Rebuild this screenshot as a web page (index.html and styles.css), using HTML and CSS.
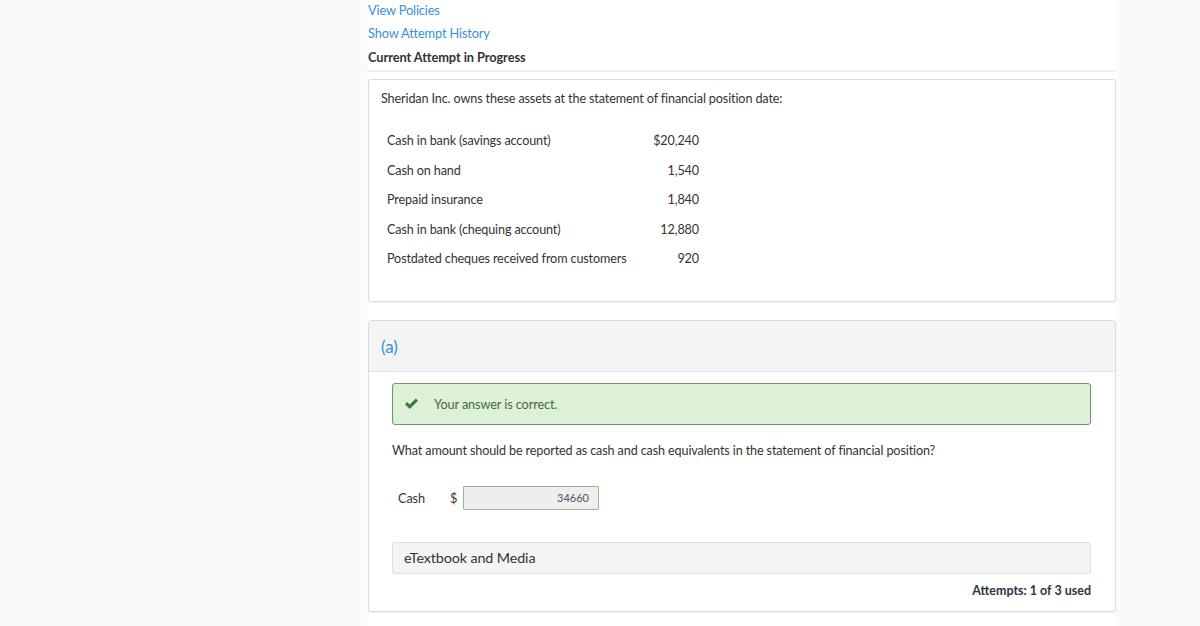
FILE: index.html
```html
<!DOCTYPE html>
<html>
<head>
<meta charset="utf-8">
<link rel="stylesheet" href="styles.css">
</head>
<body>
<main class="column">
  <nav class="top">
    <a class="link" href="#">View Policies</a>
    <a class="link" href="#">Show Attempt History</a>
    <div class="current">Current Attempt in Progress</div>
  </nav>

  <section class="card intro-card">
    <p class="intro">Sheridan Inc. owns these assets at the statement of financial position date:</p>
    <div class="assets">
      <span class="label">Cash in bank (savings account)</span><span class="value">$20,240</span>
      <span class="label">Cash on hand</span><span class="value">1,540</span>
      <span class="label">Prepaid insurance</span><span class="value">1,840</span>
      <span class="label">Cash in bank (chequing account)</span><span class="value">12,880</span>
      <span class="label">Postdated cheques received from customers</span><span class="value">920</span>
    </div>
  </section>

  <section class="card part">
    <header class="part-head">(a)</header>
    <div class="part-body">
      <div class="alert">
        <svg class="check" width="15" height="12" viewBox="0 0 15 12"><path d="M1 6.2 L3.2 4 L5.8 6.6 L11.8 0.6 L14 2.8 L5.8 11 Z" fill="#3b7a3b"/></svg>
        <span>Your answer is correct.</span>
      </div>
      <p class="question">What amount should be reported as cash and cash equivalents in the statement of financial position?</p>
      <div class="answer-row">
        <span class="cash">Cash</span>
        <span class="dollar">$</span>
        <div class="input">34660</div>
      </div>
      <div class="media">eTextbook and Media</div>
      <div class="attempts">Attempts: 1 of 3 used</div>
    </div>
  </section>
</main>
</body>
</html>
```

FILE: styles.css
```css
html, body {
  margin: 0;
  padding: 0;
  background: #fafafa;
  font-family: Lato, "Open Sans", "Liberation Sans", sans-serif;
  color: #333;
}
.column {
  margin-left: 367px;
  width: 749px;
  min-height: 626px;
  background: #fff;
}
.top {
  display: flex;
  flex-direction: column;
  padding-left: 1px;
  height: 70px;
  border-bottom: 2px solid #f0f0f0;
  font-size: 12.8px;
}
.link {
  color: #3590dc;
  text-decoration: none;
  line-height: 23px;
  letter-spacing: -0.15px;
}
.link:first-child {
  margin-top: -1px;
}
.current {
  font-weight: bold;
  line-height: 23px;
  padding-top: 1px;
  letter-spacing: -0.08px;
  color: #333;
}
.card {
  margin-left: 1px;
  border: 1px solid #dcdcdc;
  border-radius: 3px;
  box-shadow: 0 1px 1px rgba(0,0,0,0.06);
  background: #fff;
}
.intro-card {
  margin-top: 7px;
  padding: 9px 12px 29px;
  height: 183px;
}
.intro {
  margin: 0;
  font-size: 12.6px;
  letter-spacing: -0.12px;
  line-height: 20px;
}
.assets {
  margin: 17px 0 0 6px;
  display: grid;
  grid-template-columns: 250px 62px;
  font-size: 12.6px;
  letter-spacing: -0.12px;
}
.assets span {
  line-height: 29.5px;
  white-space: nowrap;
}
.value {
  text-align: right;
}
.part {
  margin-top: 18px;
  height: 290px;
}
.part-head {
  height: 50px;
  line-height: 51px;
  padding-left: 12px;
  font-size: 17px;
  color: #3590dc;
  background: #f4f4f4;
  border-bottom: 1px solid #e2e2e2;
}
.part-body {
  padding: 11px 24px 0 23px;
}
.alert {
  display: flex;
  align-items: center;
  height: 40px;
  background: #dff0d8;
  border: 1px solid #6a9a62;
  border-radius: 3px;
  color: #3c6e3c;
  font-size: 12.7px;
  letter-spacing: -0.1px;
}
.check {
  margin-left: 11px;
  margin-right: 15px;
}
.question {
  margin: 16px 0 0;
  font-size: 12.6px;
  letter-spacing: -0.12px;
  line-height: 20px;
}
.answer-row {
  display: flex;
  align-items: center;
  margin-top: 25px;
  height: 24px;
  font-size: 12.7px;
  letter-spacing: -0.1px;
}
.cash {
  margin-left: 6px;
  width: 52px;
}
.dollar {
  width: 13px;
}
.input {
  box-sizing: border-box;
  width: 136px;
  height: 24px;
  line-height: 22px;
  background: #eee;
  border: 1px solid #8fbf86;
  border-radius: 1px;
  text-align: right;
  padding-right: 9px;
  font-size: 11px;
  letter-spacing: 0;
  color: #555;
}
.media {
  margin-top: 32px;
  box-sizing: border-box;
  height: 32px;
  line-height: 30px;
  padding-left: 11px;
  background: #f4f4f4;
  border: 1px solid #dedede;
  border-radius: 3px;
  font-size: 14.3px;
  letter-spacing: -0.1px;
  color: #333;
}
.attempts {
  margin-top: 7px;
  text-align: right;
  font-weight: bold;
  font-size: 12.5px;
  line-height: 20px;
  color: #2c3440;
}
```
